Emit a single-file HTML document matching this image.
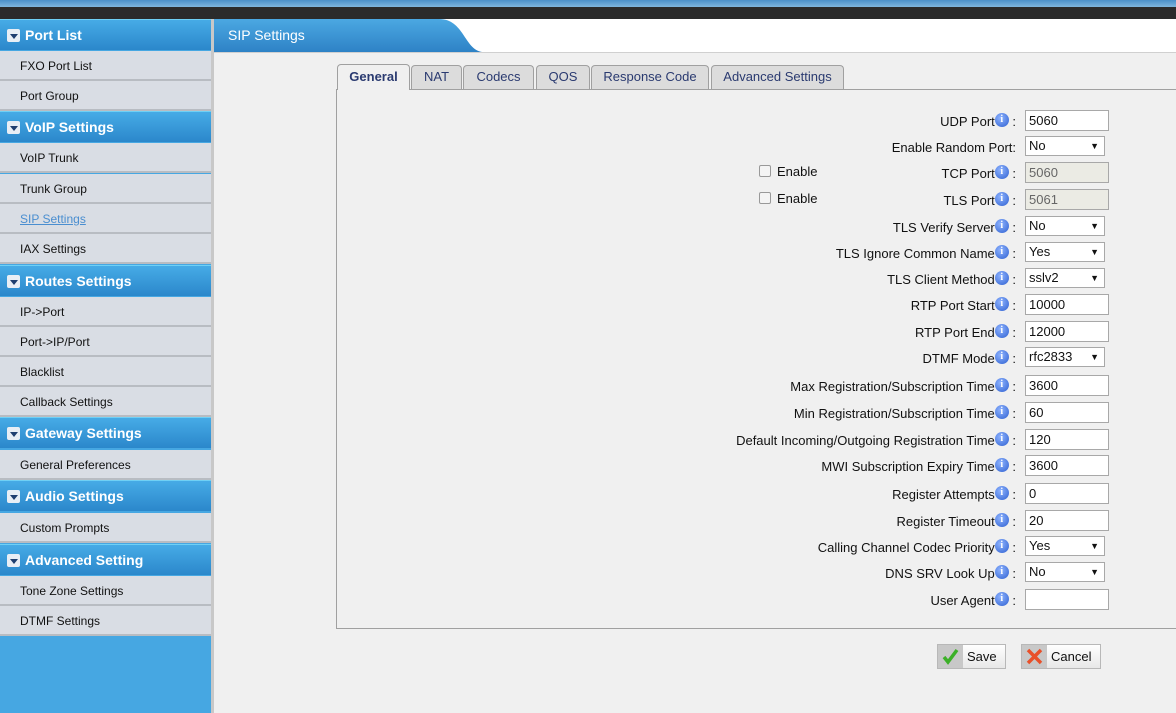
<!DOCTYPE html>
<html><head><meta charset="utf-8"><style>
*{margin:0;padding:0;box-sizing:border-box}
body{width:1176px;height:713px;overflow:hidden;background:#f0f0f0;font-family:"Liberation Sans",Arial,sans-serif;font-size:13px;color:#111;position:relative}
.top{position:absolute;left:0;top:0;width:1176px;height:19px;background:#2b2b2b}
.top:before{content:"";position:absolute;left:0;top:0;right:0;height:7px;background:linear-gradient(#4a8fc8,#7fb6de)}
.side{position:absolute;left:0;top:19px;width:214px;height:694px;background:#46a7e2;border-right:3px solid #c8c8c8}
.side div{position:absolute;left:0;width:211px}
.h{height:31px;background:linear-gradient(#46abe6,#2b87cb);color:#fff;font-weight:bold;font-size:14px;line-height:31px;padding-left:25px;border-top:1px solid #6fd0f5}
.h:before{content:"";position:absolute;left:7px;top:9px;width:13px;height:13px;background:#e8eef5;border-radius:2px}
.h:after{content:"";position:absolute;left:10px;top:14px;border-left:4px solid transparent;border-right:4px solid transparent;border-top:5px solid #1f3f70}
.i{height:30px;background:#d9dde4;border-bottom:2px solid #b8bcc2;line-height:31px;padding-left:20px;font-size:12px;color:#111}
.i.a{color:#4a8ed0;text-decoration:underline}
.hdr{position:absolute;left:214px;top:19px;width:962px;height:34px;background:#fff;border-bottom:1px solid #d0d0d0}
.hdr svg{position:absolute;left:0;top:0}
.hdr span{position:absolute;left:14px;top:8px;color:#fff;font-size:14px}
.panel{position:absolute;left:336px;top:89px;width:850px;height:540px;border:1px solid #a0a0a0;background:#f0f0f0}
.tab{position:absolute;top:65px;height:24px;border:1px solid #a0a0a0;border-bottom:none;border-radius:4px 4px 0 0;background:#dcdcdc;color:#2a3a70;text-align:center;line-height:22px;font-size:13px}
.tab.on{background:#f0f0f0;top:64px;height:26px;font-weight:bold;z-index:2;line-height:24px}
.lab{position:absolute;right:160px;height:22px;line-height:24px;white-space:nowrap;font-size:13px;color:#111}
.ic{display:inline-block;width:14px;height:14px;border-radius:50%;background:radial-gradient(circle at 40% 35%,#8fb4ff,#2d5fd0);color:#fff;font-size:10px;font-weight:bold;line-height:14px;text-align:center;vertical-align:4px;font-family:"Liberation Serif",serif}
.inp{position:absolute;left:1025px;width:84px;height:21px;border:1px solid #a8a8a8;background:#fff;font-size:13px;line-height:19px;padding-left:3px}
.inp.d{background:#ebebe4;color:#666}
.sel{position:absolute;left:1025px;width:80px;height:20px;border:1px solid #a8a8a8;background:#fff;font-size:13px;line-height:18px;padding-left:3px}
.sel:after{content:"▼";position:absolute;right:5px;top:0;font-size:9px}
.cb{position:absolute;left:759px;font-size:13px}
.cb i{display:inline-block;width:12px;height:12px;border:1px solid #999;border-radius:2px;background:#f4f4f4;margin-right:6px;vertical-align:-1px}
.btn{position:absolute;top:644px;height:25px;border:1px solid #b8b8b8;background:linear-gradient(#fff,#e8e8e8);font-size:13px;line-height:23px}
.btn b{position:absolute;left:0;top:0;width:25px;height:23px;background:#c8c8c8}
</style></head><body>
<div class="top"></div>
<div class="side">
<div class="h" style="top:0">Port List</div>
<div class="i" style="top:32px">FXO Port List</div>
<div class="i" style="top:62px">Port Group</div>
<div class="h" style="top:92px">VoIP Settings</div>
<div class="i" style="top:124px">VoIP Trunk</div>
<div class="i" style="top:155px">Trunk Group</div>
<div class="i a" style="top:185px">SIP Settings</div>
<div class="i" style="top:215px">IAX Settings</div>
<div class="h" style="top:246px">Routes Settings</div>
<div class="i" style="top:278px">IP-&gt;Port</div>
<div class="i" style="top:308px">Port-&gt;IP/Port</div>
<div class="i" style="top:338px">Blacklist</div>
<div class="i" style="top:368px">Callback Settings</div>
<div class="h" style="top:398px">Gateway Settings</div>
<div class="i" style="top:431px">General Preferences</div>
<div class="h" style="top:461px">Audio Settings</div>
<div class="i" style="top:494px">Custom Prompts</div>
<div class="h" style="top:525px">Advanced Setting</div>
<div class="i" style="top:557px">Tone Zone Settings</div>
<div class="i" style="top:587px">DTMF Settings</div>
</div>
<div class="hdr"><svg width="300" height="34"><defs><linearGradient id="g" x1="0" y1="0" x2="0" y2="1"><stop offset="0" stop-color="#4ba8e2"/><stop offset="1" stop-color="#2e82c6"/></linearGradient></defs><path d="M0 0 H225 C250 0 250 30 268 33 H0 Z" fill="url(#g)"/></svg><span>SIP Settings</span></div>
<div class="panel"></div>
<div class="tab on" style="left:337px;width:73px">General</div>
<div class="tab" style="left:411px;width:51px">NAT</div>
<div class="tab" style="left:463px;width:71px">Codecs</div>
<div class="tab" style="left:536px;width:54px">QOS</div>
<div class="tab" style="left:591px;width:118px">Response Code</div>
<div class="tab" style="left:711px;width:133px">Advanced Settings</div>

<div class="lab" style="top:110px">UDP Port<span class="ic">i</span> :</div><div class="inp" style="top:110px">5060</div>
<div class="lab" style="top:136px">Enable Random Port:</div><div class="sel" style="top:136px">No</div>
<div class="cb" style="top:164px"><i></i>Enable</div>
<div class="lab" style="top:162px">TCP Port<span class="ic">i</span> :</div><div class="inp d" style="top:162px">5060</div>
<div class="cb" style="top:191px"><i></i>Enable</div>
<div class="lab" style="top:189px">TLS Port<span class="ic">i</span> :</div><div class="inp d" style="top:189px">5061</div>
<div class="lab" style="top:216px">TLS Verify Server<span class="ic">i</span> :</div><div class="sel" style="top:216px">No</div>
<div class="lab" style="top:242px">TLS Ignore Common Name<span class="ic">i</span> :</div><div class="sel" style="top:242px">Yes</div>
<div class="lab" style="top:268px">TLS Client Method<span class="ic">i</span> :</div><div class="sel" style="top:268px">sslv2</div>
<div class="lab" style="top:294px">RTP Port Start<span class="ic">i</span> :</div><div class="inp" style="top:294px">10000</div>
<div class="lab" style="top:321px">RTP Port End<span class="ic">i</span> :</div><div class="inp" style="top:321px">12000</div>
<div class="lab" style="top:347px">DTMF Mode<span class="ic">i</span> :</div><div class="sel" style="top:347px">rfc2833</div>
<div class="lab" style="top:375px">Max Registration/Subscription Time<span class="ic">i</span> :</div><div class="inp" style="top:375px">3600</div>
<div class="lab" style="top:402px">Min Registration/Subscription Time<span class="ic">i</span> :</div><div class="inp" style="top:402px">60</div>
<div class="lab" style="top:429px">Default Incoming/Outgoing Registration Time<span class="ic">i</span> :</div><div class="inp" style="top:429px">120</div>
<div class="lab" style="top:455px">MWI Subscription Expiry Time<span class="ic">i</span> :</div><div class="inp" style="top:455px">3600</div>
<div class="lab" style="top:483px">Register Attempts<span class="ic">i</span> :</div><div class="inp" style="top:483px">0</div>
<div class="lab" style="top:510px">Register Timeout<span class="ic">i</span> :</div><div class="inp" style="top:510px">20</div>
<div class="lab" style="top:536px">Calling Channel Codec Priority<span class="ic">i</span> :</div><div class="sel" style="top:536px">Yes</div>
<div class="lab" style="top:562px">DNS SRV Look Up<span class="ic">i</span> :</div><div class="sel" style="top:562px">No</div>
<div class="lab" style="top:589px">User Agent<span class="ic">i</span> :</div><div class="inp" style="top:589px"></div>

<div class="btn" style="left:937px;width:69px"><b><svg width="25" height="23"><path d="M6 12 L10 17 L19 5" stroke="#3cb028" stroke-width="3.5" fill="none"/></svg></b><span style="position:absolute;left:29px">Save</span></div>
<div class="btn" style="left:1021px;width:80px"><b><svg width="25" height="23"><path d="M6 5 L19 18 M19 5 L6 18" stroke="#e8502a" stroke-width="3.5"/></svg></b><span style="position:absolute;left:29px">Cancel</span></div>
</body></html>
